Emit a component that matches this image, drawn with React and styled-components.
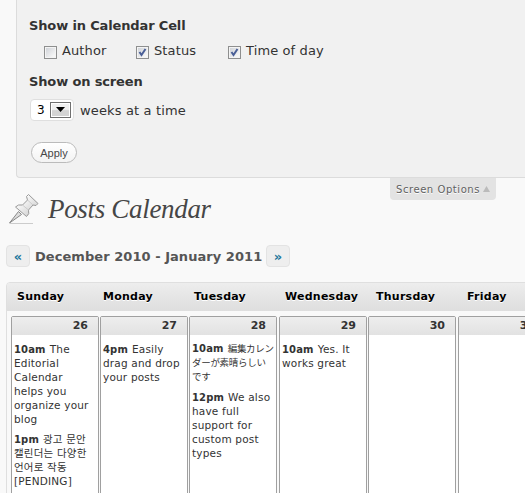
import React from "react";
import styled, { createGlobalStyle } from "styled-components";

const sans = `"DejaVu Sans", "Noto Sans CJK JP", "Noto Sans CJK KR", sans-serif`;

const GlobalStyle = createGlobalStyle`
  * { box-sizing: border-box; }
  html, body { margin: 0; background: #f9f9f9; overflow: hidden; }
  body { font-family: ${sans}; color: #333; }
`;

const Page = styled.main`
  width: 525px;
  height: 493px;
  overflow: hidden;
`;

const OptionsPanel = styled.section`
  height: 178px;
  margin-left: 16px;
  padding: 17px 0 0 12px;
  background: #f1f1f1;
  border: solid #dcdcdc;
  border-width: 0 0 1px 1px;
  border-radius: 0 0 0 4px;
`;

const PanelHeading = styled.h5`
  margin: 0;
  height: 18px;
  font-size: 13px;
  line-height: 18px;
  font-weight: bold;
  letter-spacing: -0.14px;
  white-space: nowrap;
`;

const CheckRow = styled.div`
  display: flex;
  height: 38px;
  padding: 7px 0 0 15px;
`;

const CheckLabel = styled.label`
  display: flex;
  gap: 5px;
  width: ${(p) => p.$width}px;
  font-size: 13px;
  line-height: 17px;
  letter-spacing: 0.12px;
  white-space: nowrap;
`;

const Box = styled.span`
  width: 13px;
  height: 13px;
  margin-top: 4px;
  flex: none;
  border: 1px solid #8e8f8f;
  background: linear-gradient(135deg, #cbcfd5, #f6f6f6 80%);
  box-shadow: inset 0 0 0 1px #f4f4f4;
  svg { display: block; }
`;

const WeeksRow = styled.div`
  display: flex;
  align-items: center;
  gap: 6px;
  height: 22px;
  margin: 8px 0 0 1px;
  font-size: 13px;
  letter-spacing: 0.14px;
`;

const Select = styled.span`
  display: flex;
  align-items: center;
  justify-content: space-between;
  width: 44px;
  height: 22px;
  padding: 0 2px 0 6px;
  border: 1px solid #dfdfdf;
  border-radius: 4px;
  background: #fff;
  color: #000;
  font-size: 12px;
`;

const Arrow = styled.span`
  display: flex;
  align-items: center;
  justify-content: center;
  width: 21px;
  height: 16px;
  padding-bottom: 1px;
  border: 1px solid #707070;
  box-shadow: inset 0 0 0 1px #fff;
  background: linear-gradient(#f0f0f0 45%, #d4d4d4 55%);
`;

const ApplyButton = styled.button`
  display: block;
  width: 46px;
  height: 21px;
  margin: 21px 0 0 2px;
  padding: 1px 0 0;
  border: 1px solid #bbb;
  border-radius: 11px;
  background: linear-gradient(#fff, #f3f3f3);
  color: #464646;
  font: 11px/17px "Liberation Sans", sans-serif;
`;

const OptionsTab = styled.div`
  display: flex;
  align-items: center;
  gap: 3px;
  width: 106px;
  height: 22px;
  margin-left: 390px;
  padding: 0 0 0 6px;
  border-radius: 0 0 4px 4px;
  background: #e3e3e3;
  color: #606060;
  font-size: 10px;
  letter-spacing: 0.56px;
  text-shadow: 0 1px 0 #fff;
  white-space: nowrap;
`;

const TitleRow = styled.header`
  display: flex;
  height: 44px;
  margin-top: -7px;
  padding-left: 8px;
`;

const Title = styled.h2`
  margin: 0 0 0 8px;
  font: italic 27px/33px "Liberation Serif", serif;
  letter-spacing: -0.32px;
  color: #464646;
  white-space: nowrap;
`;

const NavRow = styled.nav`
  display: flex;
  align-items: center;
  height: 22px;
  margin: 8px 0 0 6px;
`;

const NavButton = styled.button`
  width: 24px;
  height: 22px;
  padding: 1px 0 0;
  border: 1px solid #e3e3e3;
  border-radius: 4px;
  background: #eee;
  color: #21759b;
  font: bold 13px/18px ${sans};
`;

const Range = styled.span`
  width: 236px;
  padding-left: 5px;
  color: #555;
  font-size: 13px;
  font-weight: bold;
  letter-spacing: 0.05px;
  white-space: nowrap;
`;

const Calendar = styled.section`
  width: 640px;
  height: 230px;
  margin: 15px 0 0 6px;
  border: 1px solid #dfdfdf;
  border-radius: 4px 4px 0 0;
`;

const DayNames = styled.div`
  display: grid;
  grid-template-columns: 86px 91px 91px 91px 91px 91px;
  height: 28px;
  padding-left: 10px;
  border-radius: 3px 3px 0 0;
  background: linear-gradient(#ededed, #dedede);
  color: #000;
  font-size: 11px;
  font-weight: bold;
  line-height: 27px;
  letter-spacing: 0.25px;
  text-shadow: 0 1px 0 #fff;
`;

const Week = styled.div`
  display: grid;
  grid-template-columns: 89px 89px 90px 89px 90px 89px;
  margin: 5px 0 0 4px;
`;

const Day = styled.article`
  width: 88px;
  height: 190px;
  border: 1px solid #a0a0a0;
  border-radius: 2px 2px 0 0;
  background: #fff;
`;

const DayNumber = styled.div`
  height: 18px;
  margin-bottom: 7px;
  padding-right: 10px;
  background: linear-gradient(#eee, #e2e2e2);
  font-size: 11px;
  font-weight: bold;
  line-height: 18px;
  text-align: right;
`;

const cjk = {
  ja: "font-size: 9.5px; letter-spacing: -0.3px;",
  ko: "font-size: 10.5px; letter-spacing: 0.2px;",
};

const Post = styled.div`
  margin: 0 0 6px 2px;
  font-size: 10.5px;
  letter-spacing: 0.19px;
`;

const Line = styled.div`
  display: flex;
  align-items: baseline;
  gap: 4px;
  height: 14px;
  line-height: 14px;
  white-space: nowrap;
`;

const Words = styled.span`
  ${(p) => cjk[p.lang] || ""}
`;

const Time = styled.b`
  font-size: 10px;
  letter-spacing: 0.15px;
`;

const checkLabels = [
  { text: "Author", width: 92 },
  { text: "Status", width: 92, checked: true },
  { text: "Time of day", width: 110, checked: true },
];

const dayNames = ["Sunday", "Monday", "Tuesday", "Wednesday", "Thursday", "Friday"];

const days = [
  { n: 26, posts: [
    { time: "10am", lines: ["The", "Editorial", "Calendar", "helps you", "organize your", "blog"] },
    { time: "1pm", lang: "ko", lines: ["광고 문안", "캘린더는 다양한", "언어로 작동", "[PENDING]"] },
  ] },
  { n: 27, posts: [{ time: "4pm", lines: ["Easily", "drag and drop", "your posts"] }] },
  { n: 28, posts: [
    { time: "10am", lang: "ja", lines: ["編集カレン", "ダーが素晴らしい", "です"] },
    { time: "12pm", lines: ["We also", "have full", "support for", "custom post", "types"] },
  ] },
  { n: 29, posts: [{ time: "10am", lines: ["Yes. It", "works great"] }] },
  { n: 30, posts: [] },
  { n: 31, posts: [] },
];

function Pin() {
  return (
    <svg width="32" height="32" viewBox="0 0 32 32">
      <defs>
        <linearGradient id="pin" x1="0" y1="0" x2="1" y2="1">
          <stop offset="0.2" stopColor="#fff" />
          <stop offset="1" stopColor="#c4c4c4" />
        </linearGradient>
      </defs>
      <path d="M2 30.500H25" stroke="#ccc" />
      <path d="M1.500 30L10.500 18.500L13.500 21.500Z" fill="#ddd" stroke="#888" />
      <path d="M18.500 3.500L20.500 1.500L30 10.500L28 12.500L25 12L20.500 17Q22 21 18.500 23.500L7.500 14Q10 11 14.500 12L19.500 7Z" fill="url(#pin)" stroke="#999" strokeLinejoin="round" />
      <path d="M19.500 7L25 12M14.500 12L20.500 17" fill="none" stroke="#ccc" />
    </svg>
  );
}

export default function App() {
  return (
    <Page>
      <GlobalStyle />
      <OptionsPanel>
        <PanelHeading>Show in Calendar Cell</PanelHeading>
        <CheckRow>
          {checkLabels.map((c) => (
            <CheckLabel key={c.text} $width={c.width}>
              <Box>
                {c.checked && (
                  <svg width="11" height="11" viewBox="0 0 11 11">
                    <path d="M2.500 5L4.500 8L8.500 2" fill="none" stroke="#4a5f97" strokeWidth="2" />
                  </svg>
                )}
              </Box>
              {c.text}
            </CheckLabel>
          ))}
        </CheckRow>
        <PanelHeading>Show on screen</PanelHeading>
        <WeeksRow>
          <Select>
            3
            <Arrow>
              <svg width="9" height="5" viewBox="0 0 9 5"><path d="M0 0H9L4.500 5Z" /></svg>
            </Arrow>
          </Select>
          weeks at a time
        </WeeksRow>
        <ApplyButton>Apply</ApplyButton>
      </OptionsPanel>
      <OptionsTab>
        Screen Options
        <svg width="7" height="6" viewBox="0 0 7 6"><path d="M3.500 0L7 6H0Z" fill="#bbb" /></svg>
      </OptionsTab>
      <TitleRow>
        <Pin />
        <Title>Posts Calendar</Title>
      </TitleRow>
      <NavRow>
        <NavButton>«</NavButton>
        <Range>December 2010 - January 2011</Range>
        <NavButton>»</NavButton>
      </NavRow>
      <Calendar>
        <DayNames>{dayNames.map((d) => <span key={d}>{d}</span>)}</DayNames>
        <Week>
          {days.map((d) => (
            <Day key={d.n}>
              <DayNumber>{d.n}</DayNumber>
              {d.posts.map((p) => (
                <Post key={p.time}>
                  {p.lines.map((line, i) => (
                    <Line key={line}>
                      {i === 0 && <Time>{p.time}</Time>}
                      <Words lang={p.lang}>{line}</Words>
                    </Line>
                  ))}
                </Post>
              ))}
            </Day>
          ))}
        </Week>
      </Calendar>
    </Page>
  );
}
